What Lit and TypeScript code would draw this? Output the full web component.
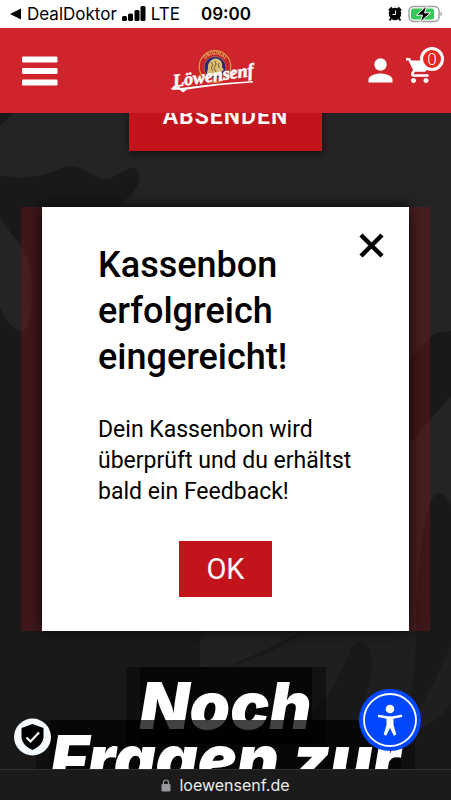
import { LitElement, html, css, svg } from "lit";
import { customElement } from "lit/decorators.js";

@customElement("phone-status")
class PhoneStatus extends LitElement {
  static styles = css`
    :host {
      display: grid;
      grid-template-columns: 1fr auto 1fr;
      align-items: center;
      height: 28px;
      padding: 0 8px 0 9px;
      background: #fff;
      color: #000;
      font: 17px/28px Inter, sans-serif;
    }
    .left, .right { display: flex; align-items: center; gap: 5px; }
    .right { justify-content: flex-end; gap: 6px; }
    .time { font-weight: 600; }
    svg { display: block; flex: none; }
  `;
  render() {
    return html`
      <div class="left">
        <svg width="13" height="12" viewBox="0 0 13 12"><path d="M12 0.5v11L1 6z" /></svg>
        <span>DealDoktor</span>
        <svg width="24" height="16" viewBox="0 0 24 16">
          <rect x="0" y="10" width="5" height="5" rx="1.5" />
          <rect x="6" y="7.5" width="5" height="7.5" rx="1.5" />
          <rect x="12.5" y="4" width="5" height="11" rx="1.5" />
          <rect x="18.5" y="0" width="5" height="15" rx="1.5" />
        </svg>
        <span>LTE</span>
      </div>
      <span class="time">09:00</span>
      <div class="right">
        <svg width="14" height="16" viewBox="0 0 14 16">
          <circle cx="7" cy="8" r="6.2" />
          <path d="M1 4.5L4 1.5M13 4.5L10 1.5" stroke="#000" stroke-width="2.2" />
          <path d="M3 12.5L1.5 14.5M11 12.5L12.5 14.5" stroke="#000" stroke-width="1.8" />
          <path d="M7.5 4.5V8.500H4.500" stroke="#fff" fill="none" />
        </svg>
        <svg width="35" height="18" viewBox="0 0 35 18">
          <rect x="1" y="1.5" width="30" height="15" rx="4.5" fill="#fff" stroke="#a0a0a0" stroke-width="1.5" />
          <rect x="3" y="3.5" width="23" height="11" rx="2.5" fill="#34c759" />
          <path d="M32.500 6.500c2 1 2 4 0 5z" fill="#a0a0a0" />
          <path d="M19 0.500L8.500 10.200h6l-2.500 7.300L22.500 7.800h-6z" stroke="#fff" stroke-width="1" />
        </svg>
      </div>
    `;
  }
}

@customElement("shop-header")
class ShopHeader extends LitElement {
  static styles = css`
    :host {
      display: flex;
      justify-content: space-between;
      align-items: center;
      height: 85px;
      padding: 0 7px 0 22px;
      background: #d0242c;
    }
    button, a { display: block; padding: 0; border: 0; background: none; color: #fff; text-decoration: none; }
    svg { display: block; }
    .tools { display: flex; align-items: center; gap: 13px; }
    .cart { position: relative; padding-right: 13px; }
    .badge {
      position: absolute;
      top: -11px;
      right: 0;
      box-sizing: border-box;
      width: 24px;
      height: 24px;
      border: 3px solid #fff;
      border-radius: 50%;
      background: #e6251c;
      font: 300 17px/18px Roboto, sans-serif;
      text-align: center;
    }
    .script { font: italic 700 18px "Liberation Serif", serif; fill: #fff; stroke: #fff; stroke-width: 0.6px; }
    .arc { font: 700 5px Roboto, sans-serif; fill: #e3b45a; }
  `;
  render() {
    return html`
      <button class="menu" aria-label="Menü">
        <svg width="36" height="30" viewBox="0 0 36 30" fill="#fff">
          <rect y="0.5" width="35.5" height="6" rx="1.2" />
          <rect y="12" width="35.5" height="6" rx="1.2" />
          <rect y="23.5" width="35.5" height="6" rx="1.2" />
        </svg>
      </button>
      <a href="#" aria-label="Löwensenf">
        <svg width="87" height="46" viewBox="0 0 87 46">
          <circle cx="45" cy="18.500" r="15.800" fill="#c9202a" stroke="#d9a04c" stroke-width="1.2" />
          <circle cx="45" cy="19.500" r="11" fill="#2c2474" stroke="#c79a50" stroke-width="0.6" />
          <path d="M38 28c-2-3 0-6 0-9 0-5 4-9 8-8.500 4 0 7 4 6 8.500l2 3-2 1-1 4-3 1z" fill="#d9bd76" />
          <path d="M41 14l2 3-2 3 2 3M45 13l1 3-2 4 2 4M49 15l-1 3 2 2" stroke="#7c6531" fill="none" />
          <path id="ring" d="M32.800 19a12.200 12.200 0 0 1 24.400 0" fill="none" />
          <text class="arc"><textPath href="#ring" startOffset="8">ORIGINAL</textPath></text>
          <path d="M1 41c2-3 6-3 10-1C35 36.500 60 34.500 83 33v1.500C60 36 38 38 17 41.500l-4 3-3-2.500c-4-1-6 1-9-1z" fill="#fff" />
          <text class="script" transform="rotate(-8 4 40)" x="4" y="39">Löwensenf</text>
        </svg>
      </a>
      <div class="tools">
        <a href="#" aria-label="Konto">
          <svg width="25" height="25" viewBox="0 0 25 25" fill="#fff">
            <circle cx="12.5" cy="6.500" r="6.200" />
            <path d="M0.500 24.500v-3c0-4 8-6 12-6s12 2 12 6v3z" />
          </svg>
        </a>
        <a class="cart" href="#" aria-label="Warenkorb">
          <svg width="25" height="25" viewBox="1 2 20 20" fill="#fff">
            <path d="M7 18c-1.100 0-1.990.9-1.990 2S5.900 22 7 22s2-.9 2-2-.9-2-2-2zM1 2v2h2l3.600 7.590-1.350 2.450c-.16.280-.25.610-.25.960 0 1.100.9 2 2 2h12v-2H7.420c-.14 0-.25-.11-.25-.25l.030-.12.9-1.630h7.450c.75 0 1.410-.41 1.750-1.030l3.580-6.490A1 1 0 0 0 20 4H5.210l-.94-2H1zm16 16c-1.100 0-1.990.9-1.990 2s.89 2 1.990 2 2-.9 2-2-.9-2-2-2z" />
          </svg>
          <span class="badge">0</span>
        </a>
      </div>
    `;
  }
}

@customElement("receipt-dialog")
class ReceiptDialog extends LitElement {
  static styles = css`
    :host { display: block; padding: 0 21px; overflow-x: clip; background: rgba(139, 19, 27, 0.35); }
    .card {
      position: relative;
      display: flex;
      flex-direction: column;
      align-items: flex-start;
      padding: 35px 56px 34px;
      background: #fff;
      color: #000;
      box-shadow: 0 0 15px rgba(0, 0, 0, 0.8);
      font-family: Roboto, sans-serif;
    }
    h2 { margin: 0; font-size: 36px; line-height: 46px; font-weight: 500; }
    p { margin: 34px 0 0; font-size: 23px; line-height: 31px; }
    .ok {
      align-self: center;
      margin-top: 34px;
      padding: 0 27px;
      border: 0;
      background: #c3141b;
      color: #fff;
      font: 29px/56px Roboto, sans-serif;
    }
    .close { position: absolute; top: 26px; right: 25px; padding: 0; border: 0; background: none; }
    .close svg { display: block; }
  `;
  render() {
    return html`
      <div class="card" role="dialog" aria-labelledby="title">
        <button class="close" aria-label="Schließen">
          <svg width="25" height="25" viewBox="0 0 25 25"><path d="M2 2L23 23M23 2L2 23" stroke="#000" stroke-width="4.5" /></svg>
        </button>
        <h2 id="title">Kassenbon erfolgreich eingereicht!</h2>
        <p>Dein Kassenbon wird überprüft und du erhältst bald ein Feedback!</p>
        <button class="ok">OK</button>
      </div>
    `;
  }
}

const backdrop = svg`
  <path d="M0 14C4 8 9 4 14 0H0z" fill="#191919" />
  <path d="M0 62C22 68 44 63 62 55C72 52 80 54 88 59C97 65 103 68 113 64C122 60 128 54 134 55C141 59 141 69 134 78L119 94V656H0z" fill="#191919" />
  <path d="M0 105L20 132C28 143 33 160 32 177C32 195 31 218 22 218C14 218 6 208 0 195z" fill="#242424" />
  <path d="M400 255L430 224Q436 218 451 218V283L430 307L400 342z" fill="#191919" />
  <path d="M100 517H416C416 440 428 380 438 380Q444 380 451 392V656H100z" fill="#191919" />
  <path d="M200 545Q198 530 202 517H306C285 526 250 545 225 554H200z" fill="#212121" />
  <path d="M212 554C245 554 285 534 306 517H416C416 560 410 600 395 656H330C355 610 372 580 372 550C372 534 362 524 352 534C335 575 320 600 290 610L212 590z" fill="#1f1f1f" />
  <path d="M413 608Q435 570 451 533V590Q440 608 413 618z" fill="#1f1f1f" />
`;

@customElement("app-root")
class AppRoot extends LitElement {
  static styles = css`
    :host { display: flex; flex-direction: column; height: 100vh; overflow: hidden; background: #191919; }
    phone-status, shop-header, footer { flex: none; }
    main { position: relative; flex: 1; min-height: 0; overflow: hidden; background: #242424; }
    .backdrop { position: absolute; inset: 0; width: 100%; height: 100%; }
    .page { position: relative; display: flex; flex-direction: column; align-items: center; margin-top: -30px; }
    .send {
      padding: 0 34px;
      border: 0;
      background: #c3141b;
      color: #fff;
      font: 600 23px/68px Roboto, sans-serif;
      letter-spacing: 1px;
      box-shadow: 0 3px 8px rgba(0, 0, 0, 0.5);
    }
    receipt-dialog { align-self: stretch; margin: 56px 21px 0; }
    h1 {
      display: flex;
      flex-direction: column;
      align-items: center;
      margin: 36px 0 0;
      color: #fff;
      font: italic 900 65px/77px Inter, sans-serif;
      white-space: nowrap;
    }
    .line { position: relative; padding: 0 14px; background: rgba(0, 0, 0, 0.4); }
    .line + .line { margin-top: -24px; }
    .word { display: block; background: rgba(0, 0, 0, 0.57); }
    .privacy, .access { position: absolute; padding: 0; border: 0; border-radius: 50%; background: none; }
    .privacy { left: 14px; bottom: 13px; }
    .access { right: 30px; bottom: 18px; }
    .privacy svg, .access svg { display: block; }
    footer {
      display: flex;
      justify-content: center;
      align-items: center;
      gap: 8px;
      box-sizing: border-box;
      height: 31px;
      border-top: 1px solid #303030;
      background: #1b1b1b;
      color: #ececec;
      font: 16px/30px Inter, sans-serif;
    }
  `;
  render() {
    return html`
      <phone-status></phone-status>
      <shop-header></shop-header>
      <main>
        <svg class="backdrop" viewBox="0 0 451 656" preserveAspectRatio="xMidYMin slice">${backdrop}</svg>
        <div class="page">
          <button class="send">ABSENDEN</button>
          <receipt-dialog></receipt-dialog>
          <h1>
            <span class="line"><span class="word">Noch</span></span>
            <span class="line"><span class="word">Fragen zur</span></span>
          </h1>
        </div>
        <button class="privacy" aria-label="Datenschutz">
          <svg width="37" height="38" viewBox="0 0 37 38">
            <circle cx="18.5" cy="19" r="18.5" fill="#f5faff" />
            <path d="M18.5 6L29.500 10v8.500c0 6-4.500 10.500-11 13.500c-6.500-3-11-7.500-11-13.500V10z" />
            <path d="M12.5 19.500l4 4 8.500-9" fill="none" stroke="#fff" stroke-width="2.2" />
          </svg>
        </button>
        <button class="access" aria-label="Barrierefreiheit">
          <svg width="62" height="62" viewBox="0 0 62 62">
            <circle cx="31" cy="31" r="31" fill="#0048ff" />
            <circle cx="31" cy="31" r="26" fill="none" stroke="#fff" stroke-width="1.8" />
            <circle cx="31" cy="20" r="4.300" fill="#fff" />
            <path d="M20 27l8 1.500h6l8-1.500" fill="none" stroke="#fff" stroke-width="2.4" stroke-linecap="round" />
            <path d="M27.500 28h7v8l2.800 9.500-2.500 1.300L31 39l-3.800 7.800-2.500-1.300L27.500 36z" fill="#fff" />
          </svg>
        </button>
      </main>
      <footer>
        <svg width="10" height="13" viewBox="0 0 10 13">
          <rect x="0.5" y="5" width="9" height="7.500" rx="1.2" fill="#98989e" />
          <path d="M2.500 6V3.500a2.500 2.500 0 0 1 5 0V6" fill="none" stroke="#98989e" stroke-width="1.2" />
        </svg>
        <span>loewensenf.de</span>
      </footer>
    `;
  }
}
